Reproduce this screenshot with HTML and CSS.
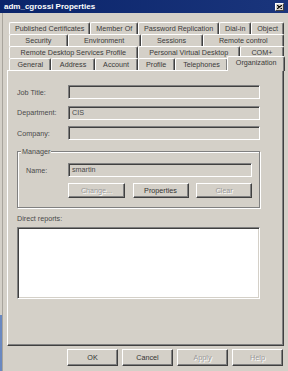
FILE: index.html
```html
<!DOCTYPE html>
<html>
<head>
<meta charset="utf-8">
<title>adm_cgrossi Properties</title>
<link rel="stylesheet" href="styles.css">
</head>
<body>
<div class="dialog">
  <div class="titlebar">
    <span class="title">adm_cgrossi Properties</span>
    <span class="close"><svg width="5" height="4" viewBox="0 0 5 4"><path d="M0 0L5 4M5 0L0 4" stroke="#000" stroke-width="1.1"/></svg></span>
  </div>
  <div class="frame">
    <div class="edge"></div>
    <div class="client">
      <div class="tabs">
        <div class="tabrow">
          <span class="tab">Published Certificates</span>
          <span class="tab">Member Of</span>
          <span class="tab">Password Replication</span>
          <span class="tab">Dial-in</span>
          <span class="tab">Object</span>
        </div>
        <div class="tabrow">
          <span class="tab">Security</span>
          <span class="tab">Environment</span>
          <span class="tab">Sessions</span>
          <span class="tab">Remote control</span>
        </div>
        <div class="tabrow">
          <span class="tab">Remote Desktop Services Profile</span>
          <span class="tab">Personal Virtual Desktop</span>
          <span class="tab">COM+</span>
        </div>
        <div class="tabrow">
          <span class="tab">General</span>
          <span class="tab">Address</span>
          <span class="tab">Account</span>
          <span class="tab">Profile</span>
          <span class="tab">Telephones</span>
          <span class="tab active">Organization</span>
        </div>
      </div>
      <div class="panel">
        <div class="fields">
          <span class="label">Job Title:</span><div class="box"></div>
          <span class="label">Department:</span><div class="box">CIS</div>
          <span class="label">Company:</span><div class="box"></div>
        </div>
        <div class="group">
          <span class="legend">Manager</span>
          <div class="namerow">
            <span class="label">Name:</span><div class="box">smartin</div>
          </div>
          <div class="mgrbuttons">
            <button class="btn disabled">Change...</button>
            <button class="btn">Properties</button>
            <button class="btn disabled">Clear</button>
          </div>
        </div>
        <div class="reports-label">Direct reports:</div>
        <div class="list"></div>
      </div>
      <div class="actions">
        <button class="btn wide">OK</button>
        <button class="btn wide">Cancel</button>
        <button class="btn wide disabled">Apply</button>
        <button class="btn wide disabled">Help</button>
      </div>
    </div>
  </div>
</div>
</body>
</html>
```

FILE: styles.css
```css
html, body {
  margin: 0;
  padding: 0;
}
body {
  width: 288px;
  height: 371px;
  overflow: hidden;
  background: #d4d0c8;
  font-family: "Liberation Sans", Arial, sans-serif;
  font-size: 7.2px;
  color: #333;
}
.dialog {
  display: flex;
  flex-direction: column;
  height: 371px;
}
.titlebar {
  height: 13px;
  display: flex;
  align-items: center;
  justify-content: space-between;
  padding: 0 4px;
  background: linear-gradient(to right, #0a246a, #1a357c);
}
.title {
  color: #fff;
  font-weight: bold;
  font-size: 8px;
  line-height: 13px;
}
.close {
  width: 9px;
  height: 8px;
  box-sizing: border-box;
  display: flex;
  align-items: center;
  justify-content: center;
  background: #d4d0c8;
  border-top: 1px solid #fff;
  border-left: 1px solid #fff;
  border-right: 1px solid #404040;
  border-bottom: 1px solid #404040;
}
.frame {
  display: flex;
  flex: 1;
}
.edge {
  width: 3px;
  background: linear-gradient(to bottom, transparent 0 302px, #6a88c0 302px);
  box-shadow: inset -1px 0 #a8a49c;
}
.client {
  flex: 1;
  display: flex;
  flex-direction: column;
}
.tabs {
  margin: 9px 4px 0 6px;
}
.tabrow {
  display: flex;
  height: 12px;
}
.tab {
  flex: 1 1 auto;
  box-sizing: border-box;
  height: 12px;
  text-align: center;
  white-space: nowrap;
  line-height: 11px;
  padding: 0 1px;
  color: #3a3a3a;
  border-top: 1px solid #fff;
  border-left: 1px solid #fff;
  border-right: 1px solid #404040;
  box-shadow: inset -1px 0 #808080;
  border-radius: 2px 2px 0 0;
  background: #d4d0c8;
}
.tab.active {
  position: relative;
  z-index: 2;
  height: 15px;
  margin: -2px -1px 0 -1px;
}
.panel {
  margin-left: 4px;
  width: 277px;
  height: 276px;
  box-sizing: border-box;
  border-top: 1px solid #fff;
  border-left: 1px solid #fff;
  border-right: 1px solid #404040;
  border-bottom: 1px solid #404040;
  box-shadow: inset -1px -1px #808080;
  padding: 14px 23px 0 9px;
}
.fields {
  display: grid;
  grid-template-columns: 51px 1fr;
  grid-auto-rows: 14px;
  row-gap: 6.5px;
  align-items: center;
}
.label {
  color: #4a4a4a;
  white-space: nowrap;
}
.box {
  height: 14px;
  box-sizing: border-box;
  border-top: 1px solid #808080;
  border-left: 1px solid #808080;
  border-right: 1px solid #fff;
  border-bottom: 1px solid #fff;
  box-shadow: inset 1px 1px #404040, inset -1px -1px #d4d0c8;
  background: #d4d0c8;
  padding: 0 3px;
  line-height: 12px;
  color: #4a4a4a;
}
.group {
  position: relative;
  margin-top: 11px;
  border: 1px solid #808080;
  box-shadow: inset 1px 1px #fff, 1px 1px #fff;
  padding: 11px 7px 9px 8px;
}
.legend {
  position: absolute;
  top: -5px;
  left: 3px;
  padding: 0 1px;
  line-height: 9px;
  background: #d4d0c8;
  color: #4a4a4a;
}
.namerow {
  display: grid;
  grid-template-columns: 42px 1fr;
  align-items: center;
}
.mgrbuttons {
  display: grid;
  grid-template-columns: 57px 56px 56px;
  justify-content: space-between;
  margin: 6px 0 0 42px;
}
.btn {
  height: 15px;
  box-sizing: border-box;
  padding: 0;
  margin: 0;
  font-family: inherit;
  font-size: 7.2px;
  color: #333;
  background: #d4d0c8;
  border-top: 1px solid #fff;
  border-left: 1px solid #fff;
  border-right: 1px solid #404040;
  border-bottom: 1px solid #404040;
  border-radius: 0;
  box-shadow: inset -1px -1px #808080;
  line-height: 12px;
}
.btn.disabled {
  color: #999;
  text-shadow: 1px 1px 0 #fff;
}
.reports-label {
  margin-top: 6px;
  line-height: 9px;
  color: #4a4a4a;
}
.list {
  margin-top: 4px;
  height: 72px;
  box-sizing: border-box;
  background: #fff;
  border-top: 1px solid #808080;
  border-left: 1px solid #808080;
  border-right: 1px solid #fff;
  border-bottom: 1px solid #fff;
  box-shadow: inset 1px 1px #404040, inset -1px -1px #d4d0c8;
}
.actions {
  display: flex;
  justify-content: flex-end;
  gap: 4px;
  margin: 3px 5px 0 0;
}
.btn.wide {
  width: 51px;
  height: 17px;
}
```
